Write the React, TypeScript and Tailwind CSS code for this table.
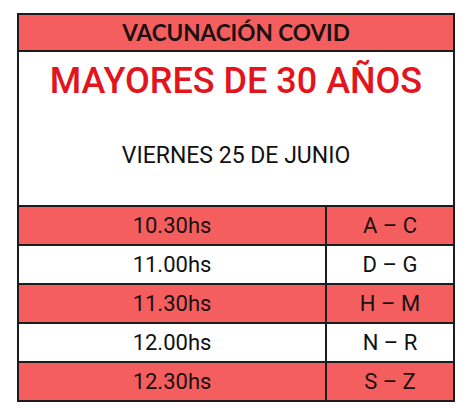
import React from "react";

const rows = [
  { time: "10.30hs", range: "A – C", red: true },
  { time: "11.00hs", range: "D – G", red: false },
  { time: "11.30hs", range: "H – M", red: true },
  { time: "12.00hs", range: "N – R", red: false },
  { time: "12.30hs", range: "S – Z", red: true },
];

const App: React.FC = () => {
  return (
    <div className="min-h-[417px] w-[466px] bg-white pt-[13px] pl-[17px]">
      <div className="w-[438px] border-2 border-[#1c1c1c] font-['Roboto',sans-serif]">
        <div className="flex h-[37px] items-center justify-center border-b-2 border-[#1c1c1c] bg-[#f45e5e]">
          <span className="font-['Lato',sans-serif] text-[22.5px] font-bold text-[#1a1010]">
            VACUNACIÓN COVID
          </span>
        </div>
        <div className="flex h-[153px] flex-col items-center bg-white">
          <span className="mt-[7px] text-[36px] font-medium leading-[44px] text-[#e3141c]">
            MAYORES DE 30 AÑOS
          </span>
          <span className="mt-[39px] text-[23px] leading-[28px] text-[#111]">
            VIERNES 25 DE JUNIO
          </span>
        </div>
        {rows.map((r) => (
          <div
            key={r.time}
            className={`flex h-[39px] border-t-2 border-[#1c1c1c] text-[22px] leading-none ${
              r.red ? "bg-[#f45e5e] text-[#1a1010]" : "bg-white text-[#111]"
            }`}
          >
            <div className="flex w-[308px] items-center justify-center border-r-2 border-[#1c1c1c]">
              {r.time}
            </div>
            <div className="flex flex-1 items-center justify-center">{r.range}</div>
          </div>
        ))}
      </div>
    </div>
  );
};

export default App;
